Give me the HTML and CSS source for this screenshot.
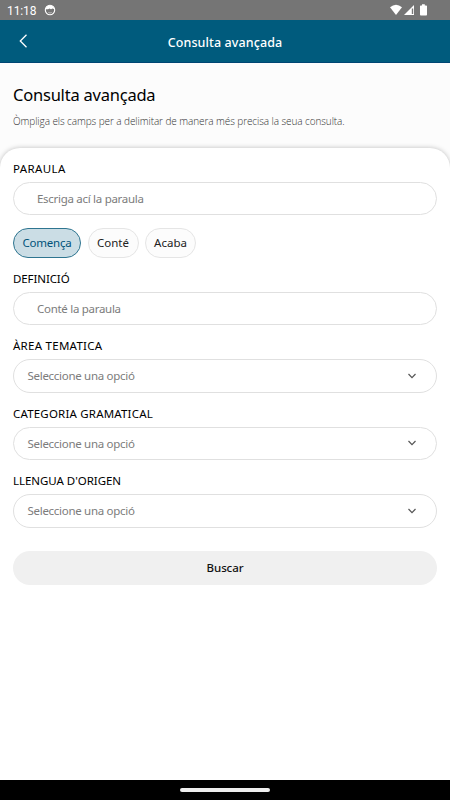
FILE: index.html
```html
<!DOCTYPE html>
<html lang="ca">
<head>
<meta charset="utf-8">
<meta name="viewport" content="width=device-width, initial-scale=1">
<title>Consulta avançada</title>
<link rel="stylesheet" href="styles.css">
</head>
<body>
<div class="status">
  <span class="clock">11:18</span>
  <svg class="notice" width="12" height="12" viewBox="0 0 12 12"><circle cx="6" cy="6" r="4.7" fill="none" stroke="#fff" stroke-width="1.1"/><path d="M1.500 5.200C2 2.300 4 1.200 6 1.200s4 1.100 4.500 4L8.500 4.400 7 5.200 5.500 4.400 4 5.200z" fill="#fff"/><path d="M4.300 8.500q1.700 1 3.400 0" fill="none" stroke="#ddd" stroke-width=".7"/></svg>
  <svg class="signals" width="38" height="12" viewBox="0 0 38 12"><path d="M0 3.300Q6 -1.700 12 3.300L6 11z" fill="#fff"/><path d="M24 1v10H14z" fill="#fff"/><path d="M21.800 4.500h1.400V10h-1.400z" fill="#777"/><path d="M32 .3h2.800v1.200h1.400q.8 0 .8.800v8.200q0 .9-.8.900h-5.400q-.8 0-.8-.9V2.300q0-.8.8-.8H32z" fill="#fff"/></svg>
</div>
<header class="appbar">
  <svg class="back" width="10" height="14" viewBox="0 0 10 14"><path d="M8.500 .8L2.300 7l6.200 6.200" fill="none" stroke="#fff" stroke-width="1.300"/></svg>
  <span class="appbar-title">Consulta avançada</span>
</header>
<section class="intro">
  <h1>Consulta avançada</h1>
  <p>Òmpliga els camps per a delimitar de manera més precisa la seua consulta.</p>
</section>
<main class="sheet">
  <div class="label l1">PARAULA</div>
  <div class="field"><span class="ph">Escriga ací la paraula</span></div>
  <div class="chips">
    <span class="chip on">Comença</span><span class="chip">Conté</span><span class="chip">Acaba</span>
  </div>
  <div class="label l2">DEFINICIÓ</div>
  <div class="field"><span class="ph">Conté la paraula</span></div>
  <div class="label l3">ÀREA TEMATICA</div>
  <div class="field select"><span>Seleccione una opció</span><svg width="10" height="8" viewBox="0 0 10 8"><path d="M1.500 2L5 5.600 8.500 2" fill="none" stroke="#555" stroke-width="1.200"/></svg></div>
  <div class="label l4">CATEGORIA GRAMATICAL</div>
  <div class="field select"><span>Seleccione una opció</span><svg width="10" height="8" viewBox="0 0 10 8"><path d="M1.500 2L5 5.600 8.500 2" fill="none" stroke="#555" stroke-width="1.200"/></svg></div>
  <div class="label l5">LLENGUA D'ORIGEN</div>
  <div class="field select"><span>Seleccione una opció</span><svg width="10" height="8" viewBox="0 0 10 8"><path d="M1.500 2L5 5.600 8.500 2" fill="none" stroke="#555" stroke-width="1.200"/></svg></div>
  <div class="submit"><span>Buscar</span></div>
</main>
<footer class="navbar"><div class="pill"></div></footer>
</body>
</html>
```
FILE: styles.css
```css
* { box-sizing: border-box; }
body {
  margin: 0;
  height: 800px;
  display: flex;
  flex-direction: column;
  overflow: hidden;
  background: #fcfcfc;
  color: #111;
  font-family: "Noto Sans", "Open Sans", sans-serif;
  font-size: 11.500px;
  white-space: nowrap;
}
svg { display: block; flex: none; }
.status {
  height: 20px;
  flex: none;
  display: flex;
  align-items: center;
  padding: 0 22px 0 7px;
  background: #757575;
  color: #fff;
}
.clock { width: 37px; padding-top: 1px; font: 12px Roboto, sans-serif; letter-spacing: -.1px; }
.signals { margin-left: auto; }
.appbar {
  height: 43px;
  flex: none;
  display: grid;
  grid-template-columns: 40px 1fr 40px;
  align-items: center;
  background: #005b7d;
  border-bottom: 1px solid #004673;
  color: #fff;
}
.back { margin-left: 18px; }
.appbar-title { padding-top: 2px; text-align: center; font-size: 12.500px; font-weight: 500; letter-spacing: .1px; }
.intro { height: 84.500px; flex: none; padding: 20px 13px 0; }
h1 { margin: 0; font-size: 16.500px; font-weight: 400; line-height: 24px; letter-spacing: -.22px; color: #000; }
p { margin: 7px 0 0; font-family: "Open Sans", sans-serif; font-size: 10px; font-weight: 300; line-height: 15px; letter-spacing: -.08px; color: #333; }
.sheet {
  flex: 1;
  padding: 10px 13px 0;
  background: #fff;
  border-radius: 20px 20px 0 0;
  box-shadow: 0 0 5px rgba(0, 0, 0, .25);
}
.label { height: 24px; line-height: 21px; font-size: 11.500px; color: #000; }
.l1 { letter-spacing: .38px; }
.l2 { letter-spacing: -.1px; }
.l3 { letter-spacing: .27px; }
.l4 { letter-spacing: .19px; }
.l5 { letter-spacing: -.04px; }
.field {
  height: 33.500px;
  display: flex;
  align-items: center;
  padding: 1px 19px 0 23px;
  border: 1px solid #e0e0e0;
  border-radius: 17px;
  color: #7c7c7c;
  letter-spacing: -.29px;
  margin-bottom: 10px;
}
.select { padding: 0 19px 0 13.500px; }
.select svg { margin-left: auto; }
.chips { display: flex; gap: 6.500px; margin: 13px 0 10px; }
.chip {
  width: 51px;
  height: 29.500px;
  display: flex;
  align-items: center;
  justify-content: center;
  border: 1px solid #e5e5e5;
  border-radius: 15px;
  background: #fcfcfc;
  color: #222;
}
.on { width: 68px; letter-spacing: -.2px; background: #cbdde5; border-color: #2e7590; color: #00527a; }
.submit {
  height: 34px;
  margin-top: 23.500px;
  padding-bottom: 1px;
  border-radius: 17px;
  background: #f0f0f0;
  display: flex;
  align-items: center;
  justify-content: center;
  font-weight: 500;
  letter-spacing: -.1px;
}
.navbar { height: 20px; flex: none; background: #000; display: flex; align-items: center; justify-content: center; }
.pill { width: 90px; height: 4px; border-radius: 2px; background: #eee; }
```
